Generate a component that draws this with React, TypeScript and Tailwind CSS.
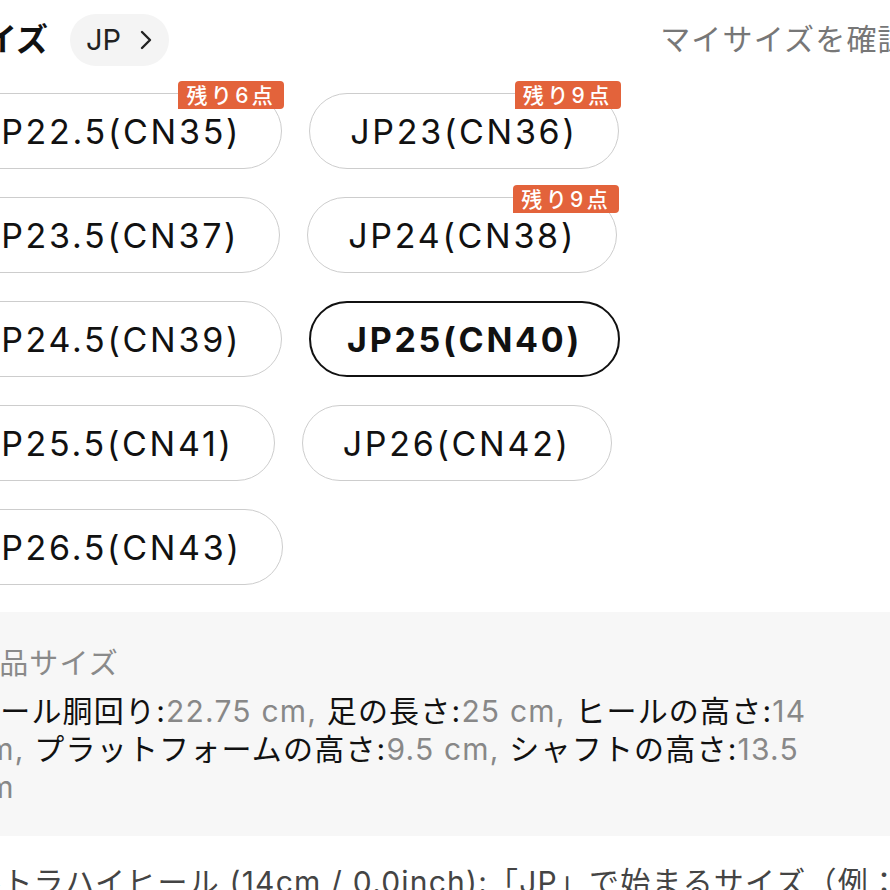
import React from 'react';

type Size = { label: string; stock?: number; selected?: boolean };

const sizes: Size[] = [
  { label: 'JP22.5(CN35)', stock: 6 },
  { label: 'JP23(CN36)', stock: 9 },
  { label: 'JP23.5(CN37)' },
  { label: 'JP24(CN38)', stock: 9 },
  { label: 'JP24.5(CN39)' },
  { label: 'JP25(CN40)', selected: true },
  { label: 'JP25.5(CN41)' },
  { label: 'JP26(CN42)' },
  { label: 'JP26.5(CN43)' },
];

const specs: [string, string][] = [
  ['ヒール胴回り:', '22.75 cm'],
  ['足の長さ:', '25 cm'],
  ['ヒールの高さ:', '14 cm'],
  ['プラットフォームの高さ:', '9.5 cm'],
  ['シャフトの高さ:', '13.5 cm'],
];

function SizeButton({ size }: { size: Size }) {
  return (
    <div
      className={`relative flex h-[76px] items-center justify-center rounded-full bg-white text-[34px] tracking-[0.08em] ${
        size.selected
          ? 'border-[2.5px] border-[#111] px-[36px] font-bold tracking-[0.06em]'
          : 'border border-[#cdcdcd] px-[40px] text-[#111]'
      }`}
    >
      {size.label}
      {size.stock && (
        <span className="absolute -right-[3px] -top-[13px] flex h-[28px] items-center rounded-[4px] rounded-bl-none bg-[#e3633b] px-[8px] text-[21px] font-medium leading-none tracking-[0.16em] text-white">
          残り{size.stock}点
        </span>
      )}
    </div>
  );
}

export default function App() {
  return (
    <div className="h-[890px] w-[890px] overflow-hidden bg-white font-['Inter','Noto_Sans_CJK_JP',sans-serif] text-[#111]">
      <div className="ml-[-60px] w-[1100px]">
        {/* header */}
        <div className="flex h-[80px] items-center pl-[13px] pb-[1px]">
          <h2 className="flex-none text-[32px] font-bold">サイズ</h2>
          <div className="ml-[22px] flex h-[52px] flex-none items-center gap-[18px] rounded-full bg-[#f4f4f4] px-[16px] text-[29px] text-[#222]">
            <span>JP</span>
            <svg width="14" height="22" viewBox="0 0 14 22" fill="none">
              <path d="M3 3l8 8-8 8" stroke="#222" strokeWidth="2.4" strokeLinecap="round" strokeLinejoin="round" />
            </svg>
          </div>
          <span className="ml-[491px] flex-none whitespace-nowrap text-[30px] tracking-[0.04em] text-[#777]">
            マイサイズを確認する
          </span>
        </div>

        {/* sizes */}
        <div className="ml-[-2px] mt-[13px] flex w-[740px] flex-wrap gap-x-[27px] gap-y-[28px]">
          {sizes.map((s) => (
            <SizeButton key={s.label} size={s} />
          ))}
        </div>

        {/* product size */}
        <div className="mt-[27px] w-[950px] bg-[#f7f7f7] pb-[30px] pl-[29px] pt-[30px]">
          <div className="text-[29px] tracking-[0.04em] text-[#8a8a8a]">商品サイズ</div>
          <p className="mt-[6px] w-[880px] text-[30px] leading-[38px] tracking-[0.04em]">
            {specs.map(([k, v], i) => (
              <React.Fragment key={k}>
                <span className="text-[#111]">{k}</span>
                <span className="text-[#888]">{v}</span>
                {i < specs.length - 1 && <span className="text-[#888]">, </span>}
              </React.Fragment>
            ))}
          </p>
        </div>

        <p className="mt-[24px] whitespace-nowrap text-[30px] tracking-[0.04em] text-[#444]">
          ウルトラハイヒール (14cm / 0.0inch):「JP」で始まるサイズ（例：JP25）
        </p>
      </div>
    </div>
  );
}
